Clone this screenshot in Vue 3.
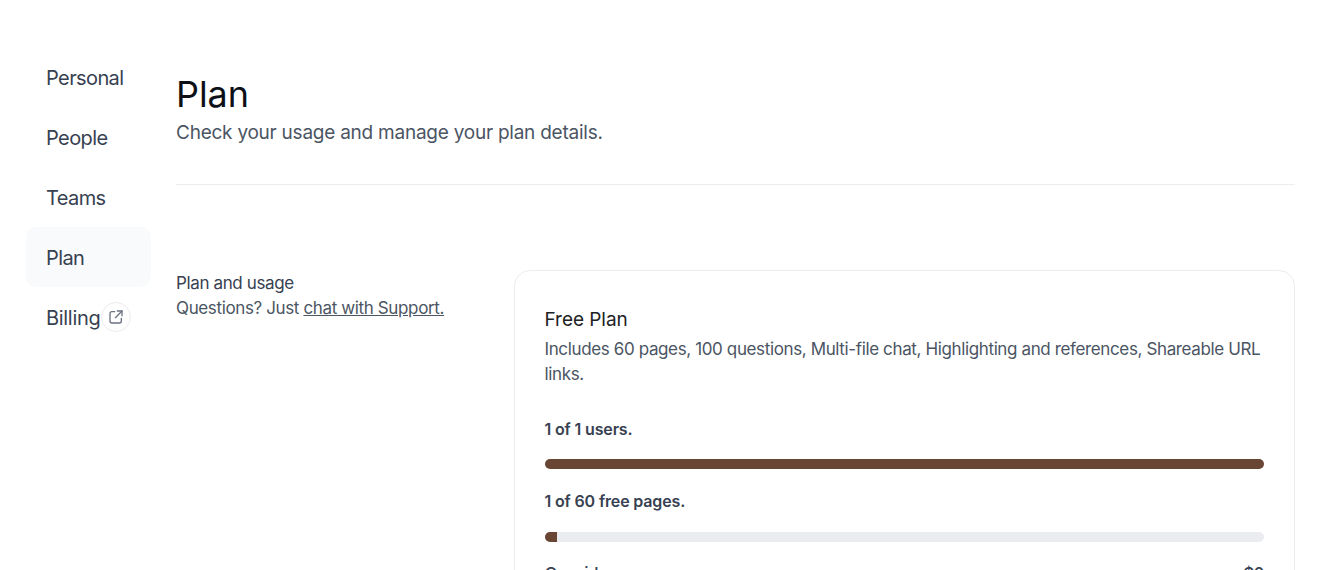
<script setup>
const nav = ['Personal', 'People', 'Teams', 'Plan']
</script>

<template>
  <div class="page">
    <aside class="side">
      <a v-for="n in nav" :key="n" class="item" :class="{ active: n === 'Plan' }"><span class="txt">{{ n }}</span></a>
      <a class="item"><span class="txt billing">Billing</span>
        <span class="ext">
          <svg width="16" height="16" viewBox="0 0 24 24" fill="none" stroke="currentColor" stroke-width="2" stroke-linecap="round" stroke-linejoin="round">
            <path d="M10 4H6a3 3 0 0 0-3 3v11a3 3 0 0 0 3 3h11a3 3 0 0 0 3-3v-4"/>
            <path d="M14 3h7v7"/>
            <path d="M21 3l-10 10"/>
          </svg>
        </span>
      </a>
    </aside>
    <main class="main">
      <header class="head">
        <h1>Plan</h1>
        <p>Check your usage and manage your plan details.</p>
      </header>
      <section class="sec">
        <div class="left">
          <div class="lt">Plan and usage</div>
          <div class="ls">Questions? Just <u>chat with Support.</u></div>
        </div>
        <div class="card">
          <h2>Free Plan</h2>
          <p class="desc">Includes 60 pages, 100 questions, Multi-file chat, Highlighting and references, Shareable URL links.</p>
          <div class="lab first">1 of 1 users.</div>
          <div class="bar"><div class="fill" style="width:100%"></div></div>
          <div class="lab">1 of 60 free pages.</div>
          <div class="bar"><div class="fill" style="width:1.67%"></div></div>
          <div class="row"><span>Consider</span><span>$0</span></div>
        </div>
      </section>
    </main>
  </div>
</template>

<style>
html, body { margin: 0; overflow: hidden; background: #fff; }
</style>
<style scoped>
.page { display: flex; height: 570px; overflow: hidden; font-family: "Inter", "Liberation Sans", sans-serif; color: #374151; }
.side { width: 125px; margin-left: 26px; padding-top: 47px; flex: none; }
.item { display: flex; align-items: center; height: 60px; padding-left: 20px; font-size: 20px; border-radius: 10px; letter-spacing: -0.6px; box-sizing: border-box; }
.txt { position: relative; top: 1px; }
.billing { letter-spacing: -0.3px; }
.active { background: #f9fafb; }
.ext { width: 30px; height: 30px; margin-left: 1px; border: 1px solid #ececf1; border-radius: 50%; display: flex; align-items: center; justify-content: center; color: #6b7280; box-sizing: border-box; }
.main { flex: none; width: 1119px; margin-left: 25px; }
.head { padding-top: 71px; height: 113px; border-bottom: 1px solid #ececf1; }
h1 { margin: 0; font-size: 36px; font-weight: 400; line-height: 46px; color: #0d1117; letter-spacing: -0.1px; }
.head p { margin: 0; font-size: 19px; line-height: 32px; color: #4b5563; letter-spacing: -0.24px; }
.sec { display: flex; margin-top: 85px; }
.left { width: 338px; flex: none; padding-top: 1px; font-size: 17px; line-height: 25px; letter-spacing: -0.37px; }
.ls { color: #4b5563; }
.card { flex: 1; border: 1px solid #ececf1; border-radius: 16px; padding: 37px 30px 0 29.5px; box-sizing: border-box; height: 330px; }
h2 { margin: 0; font-size: 19px; font-weight: 400; line-height: 24px; color: #202123; letter-spacing: -0.05px; }
.desc { margin: 5px 0 0; font-size: 17px; line-height: 25px; color: #4b5563; letter-spacing: -0.37px; }
.lab { font-size: 16px; font-weight: 600; line-height: 24px; margin-top: 20px; color: #374151; letter-spacing: -0.15px; }
.lab.first { margin-top: 30px; }
.bar { height: 10px; border-radius: 5px; background: #ebecf0; margin-top: 19px; overflow: hidden; }
.lab.first + .bar { margin-top: 18px; }
.fill { height: 100%; background: #694533; min-width: 12px; }
.row { display: flex; justify-content: space-between; margin-top: 22px; font-size: 17px; font-weight: 500; letter-spacing: -0.6px; }
</style>
